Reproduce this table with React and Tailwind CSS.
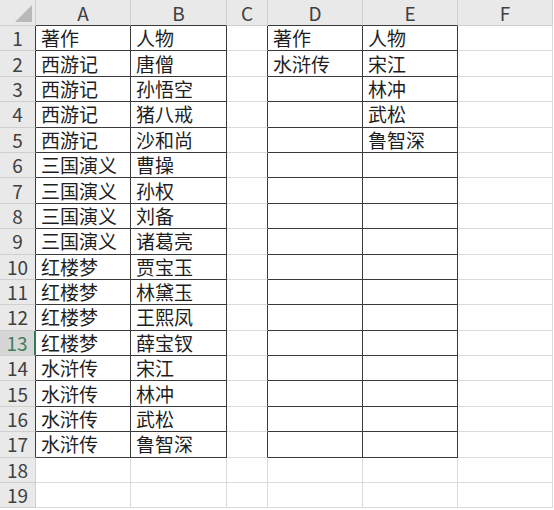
const cols = ["A", "B", "C", "D", "E", "F"];

const left = [
  ["著作", "人物"],
  ["西游记", "唐僧"],
  ["西游记", "孙悟空"],
  ["西游记", "猪八戒"],
  ["西游记", "沙和尚"],
  ["三国演义", "曹操"],
  ["三国演义", "孙权"],
  ["三国演义", "刘备"],
  ["三国演义", "诸葛亮"],
  ["红楼梦", "贾宝玉"],
  ["红楼梦", "林黛玉"],
  ["红楼梦", "王熙凤"],
  ["红楼梦", "薛宝钗"],
  ["水浒传", "宋江"],
  ["水浒传", "林冲"],
  ["水浒传", "武松"],
  ["水浒传", "鲁智深"],
];

const right = [
  ["著作", "人物"],
  ["水浒传", "宋江"],
  ["", "林冲"],
  ["", "武松"],
  ["", "鲁智深"],
];

// table cells: rows 1-17, columns A,B (0,1) and D,E (3,4)
const inTable = (r, c) => r >= 1 && r <= 17 && (c === 0 || c === 1 || c === 3 || c === 4);

function cellText(r, c) {
  if (c === 0 || c === 1) return left[r - 1]?.[c] ?? "";
  if (c === 3 || c === 4) return right[r - 1]?.[c - 3] ?? "";
  return "";
}

export default function App() {
  const rows = Array.from({ length: 19 }, (_, i) => i + 1);

  return (
    <div
      className="w-[554px] h-[510px] overflow-hidden bg-white"
      style={{ fontFamily: '"Noto Sans CJK SC", "Liberation Sans", sans-serif' }}
    >
      <div className="grid grid-cols-[36px_95px_96px_41px_95px_95px_95px] grid-rows-[26px_repeat(19,25.4px)]">
        {/* corner */}
        <div className="relative bg-[#e9e9e9] border-r border-b border-[#cfcfcf]">
          <div className="absolute right-[3px] bottom-[3px] w-0 h-0 border-l-[17px] border-l-transparent border-b-[17px] border-b-[#b9b9b9]" />
        </div>
        {cols.map((c, ci) => (
          <div
            key={c}
            className={`flex items-center justify-center bg-[#e9e9e9] border-r border-[#cfcfcf] text-[19px] leading-[20px] text-[#404040] border-b ${
              inTable(1, ci) ? "border-b-[#3a3a3a]" : "border-b-[#cfcfcf]"
            }`}
          >
            {c}
          </div>
        ))}

        {rows.map((r) => (
          <Row key={r} r={r} />
        ))}
      </div>
    </div>
  );
}

function Row({ r }) {
  const selected = r === 13;
  return (
    <>
      <div
        className={`flex items-center justify-center text-[19px] leading-[20px] border-b border-[#cfcfcf] ${
          selected
            ? "bg-[#d6d6d6] text-[#3f7d5c] border-r-2 border-r-[#2f7a4f]"
            : "bg-[#e9e9e9] text-[#404040] border-r " + (inTable(r, 0) ? "border-r-[#3a3a3a]" : "border-r-[#cfcfcf]")
        }`}
      >
        {r}
      </div>
      {cols.map((_, ci) => {
        const dark = inTable(r, ci);
        const rightDark = dark || inTable(r, ci + 1);
        const bottomDark = dark || inTable(r + 1, ci);
        return (
          <div
            key={ci}
            className={`flex items-center pl-[5px] text-[19px] leading-[20px] text-[#1e1e1e] whitespace-nowrap border-r border-b ${
              rightDark ? "border-r-[#3a3a3a]" : "border-r-[#dadada]"
            } ${bottomDark ? "border-b-[#3a3a3a]" : "border-b-[#dadada]"}`}
          >
            {cellText(r, ci)}
          </div>
        );
      })}
    </>
  );
}
